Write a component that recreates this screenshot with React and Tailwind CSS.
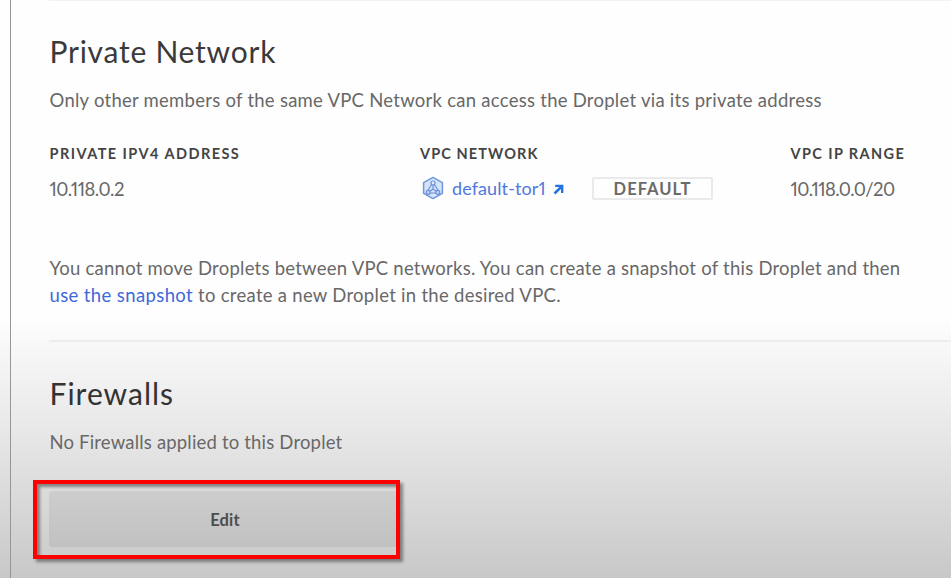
import React from "react";

const body = "text-[18.5px] leading-[27px] whitespace-nowrap text-[#686868]";
const label = "text-[14.5px] leading-[20px] font-bold whitespace-nowrap text-[#444444]";

function VpcIcon() {
  return (
    <svg width="22" height="24" viewBox="0 0 22 24" fill="none" className="shrink-0">
      <path d="M11 1.4 20.4 6.6V17.4L11 22.6 1.6 17.4V6.6Z" fill="#d3e4fb" stroke="#7096dc" strokeWidth="1.5" strokeLinejoin="round" />
      <path d="M11 9V13M11 13 7 16M11 13 15 16M9.6 8.5 5.8 14.5M12.4 8.5 16.2 14.5M8 17H14" stroke="#6d8fd6" strokeWidth="1.2" />
      <circle cx="11" cy="7" r="2" fill="#e5effd" stroke="#6d8fd6" strokeWidth="1.2" />
      <circle cx="6.2" cy="16.3" r="2" fill="#c3d9fa" stroke="#6d8fd6" strokeWidth="1.2" />
      <circle cx="15.8" cy="16.3" r="2" fill="#c3d9fa" stroke="#6d8fd6" strokeWidth="1.2" />
    </svg>
  );
}

function ArrowIcon() {
  return (
    <svg width="11" height="11" viewBox="0 0 11 11" className="relative top-[1px] shrink-0">
      <path d="M2.2 0.8H10.4V9H8V4.9L2.4 10.4 0.6 8.6 6.2 3.1H2.2Z" fill="#2474e6" />
    </svg>
  );
}

export default function App() {
  return (
    <div className="flex h-[578px] w-[951px] overflow-hidden bg-[linear-gradient(to_bottom,#fefefe_0,#fefefe_318px,#f8f8f8_345px,#e6e6e6_440px,#d7d7d7_510px,#c8c8c8_578px)] pl-[10px] font-['Lato','Noto_Sans',sans-serif]">
      <main className="flex w-[941px] shrink-0 flex-col border-l border-[#969696] pl-[39px]">
        <section className="-ml-px h-[340px] shrink-0 border-t border-[#f3f3f3] pl-[0.5px]">
          <h1 className="mt-[30px] text-[30px] leading-[40px] tracking-[0.75px] whitespace-nowrap text-[#3a3a3a]">Private Network</h1>
          <p className={`mt-[16px] tracking-[0.26px] ${body}`}>Only other members of the same VPC Network can access the Droplet via its private address</p>
          <div className="mt-[30px] grid grid-cols-[370.5px_370.5px_160px]">
            <div>
              <h2 className={`tracking-[1.45px] ${label}`}>PRIVATE IPV4 ADDRESS</h2>
              <p className={`mt-[12px] tracking-[-0.5px] proportional-nums ${body}`}>10.118.0.2</p>
            </div>
            <div>
              <h2 className={`tracking-[1.1px] ${label}`}>VPC NETWORK</h2>
              <div className="mt-[12px] flex h-[24px] items-center pl-[2px]">
                <VpcIcon />
                <a className="mr-[7px] ml-[8px] w-[94px] text-[18px] leading-[24px] tracking-[0.1px] whitespace-nowrap text-[#5078de] proportional-nums">default-tor1</a>
                <ArrowIcon />
                <span className="ml-[28px] flex h-[23px] w-[121px] items-center justify-center rounded-[2px] border-2 border-[#eaeaea] pt-[2px] text-[16.5px] leading-[20px] font-bold tracking-[1px] text-[#6a6a6a]">DEFAULT</span>
              </div>
            </div>
            <div>
              <h2 className={`tracking-[1.4px] ${label}`}>VPC IP RANGE</h2>
              <p className={`mt-[12px] tracking-[-0.6px] proportional-nums ${body}`}>10.118.0.0/20</p>
            </div>
          </div>
          <p className={`mt-[52px] tracking-[0.24px] ${body}`}>You cannot move Droplets between VPC networks. You can create a snapshot of this Droplet and then</p>
          <p className={`tracking-[0.28px] ${body}`}>
            <a className="tracking-[0.38px] text-[#4069d8]">use the snapshot</a> to create a new Droplet in the desired VPC.
          </p>
        </section>
        <section className="-ml-px border-t-2 border-[#ededed] pl-[0.5px]">
          <h1 className="mt-[31px] text-[30px] leading-[40px] tracking-[1px] whitespace-nowrap text-[#333333]">Firewalls</h1>
          <p className={`mt-[16px] tracking-[0.18px] ${body}`}>No Firewalls applied to this Droplet</p>
          <div className="mt-[24px] -ml-[16.5px] h-[79px] w-[367px] border-4 border-[#ff0000] pt-[7px] pl-[12px] shadow-[3px_3px_3px_rgba(0,0,0,0.4),inset_3px_3px_3px_rgba(0,0,0,0.4)]">
            <button className="flex h-[56px] w-[347px] items-center justify-center rounded-l-[3px] bg-[linear-gradient(to_bottom,#cdcdcd,#c1c1c1)] pt-[2px] pl-[5px] text-[16.5px] font-bold tracking-[0.2px] text-[#4d4d4d]">Edit</button>
          </div>
        </section>
      </main>
    </div>
  );
}
